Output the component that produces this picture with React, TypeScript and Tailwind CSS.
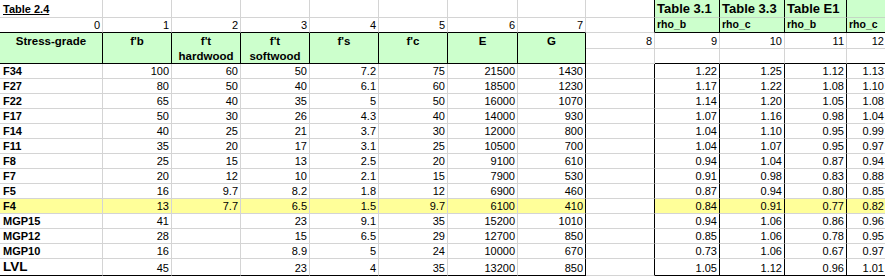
import React from "react";

type Row = [string, string[], string[]];

const rows: Row[] = [
  ["F34", ["100", "60", "50", "7.2", "75", "21500", "1430"], ["1.22", "1.25", "1.12", "1.13"]],
  ["F27", ["80", "50", "40", "6.1", "60", "18500", "1230"], ["1.17", "1.22", "1.08", "1.10"]],
  ["F22", ["65", "40", "35", "5", "50", "16000", "1070"], ["1.14", "1.20", "1.05", "1.08"]],
  ["F17", ["50", "30", "26", "4.3", "40", "14000", "930"], ["1.07", "1.16", "0.98", "1.04"]],
  ["F14", ["40", "25", "21", "3.7", "30", "12000", "800"], ["1.04", "1.10", "0.95", "0.99"]],
  ["F11", ["35", "20", "17", "3.1", "25", "10500", "700"], ["1.04", "1.07", "0.95", "0.97"]],
  ["F8", ["25", "15", "13", "2.5", "20", "9100", "610"], ["0.94", "1.04", "0.87", "0.94"]],
  ["F7", ["20", "12", "10", "2.1", "15", "7900", "530"], ["0.91", "0.98", "0.83", "0.88"]],
  ["F5", ["16", "9.7", "8.2", "1.8", "12", "6900", "460"], ["0.87", "0.94", "0.80", "0.85"]],
  ["F4", ["13", "7.7", "6.5", "1.5", "9.7", "6100", "410"], ["0.84", "0.91", "0.77", "0.82"]],
  ["MGP15", ["41", "", "23", "9.1", "35", "15200", "1010"], ["0.94", "1.06", "0.86", "0.96"]],
  ["MGP12", ["28", "", "15", "6.5", "29", "12700", "850"], ["0.85", "1.06", "0.78", "0.95"]],
  ["MGP10", ["16", "", "8.9", "5", "24", "10000", "670"], ["0.73", "1.06", "0.67", "0.97"]],
  ["LVL", ["45", "", "23", "4", "35", "13200", "850"], ["1.05", "1.12", "0.96", "1.01"]],
];

function C({ children, className }: { children?: React.ReactNode; className: string }) {
  return (
    <div className={"flex overflow-hidden whitespace-nowrap border-r border-b " + className}>
      {children}
    </div>
  );
}

const headers: [string, string | null][] = [
  ["Stress-grade", null],
  ["f'b", null],
  ["f't", "hardwood"],
  ["f't", "softwood"],
  ["f's", null],
  ["f'c", null],
  ["E", null],
  ["G", null],
];

export default function App() {
  return (
    <div className="w-[885px] h-[276px] overflow-hidden bg-white text-black font-['Liberation_Sans',Arial,sans-serif]">
      <div className="grid w-[887px] grid-cols-[103px_69px_69px_69px_69px_69px_70px_68px_69px_65px_65px_62px_40px] grid-rows-[18px_15px_16px_15px_repeat(13,15px)_17px]">
        {/* Row 1 */}
        <C className="items-end pl-[3px] pb-[1px] text-[11px] leading-[13px] font-bold underline border-r-[#d4d4d4] border-b-[#d4d4d4]">
          Table 2.4
        </C>
        {[1, 2, 3, 4, 5, 6, 7].map((i) => (
          <C key={"r1" + i} className="border-r-[#d4d4d4] border-b-[#d4d4d4]" />
        ))}
        <C className="border-r-black border-b-[#d4d4d4]" />
        {["Table 3.1", "Table 3.3", "Table E1", ""].map((t, i) => (
          <C
            key={"t" + i}
            className="items-end pl-[2px] pb-[1px] text-[13px] leading-[14px] font-bold bg-[#ccffcc] border-r-black border-b-[#c4d8c4]"
          >
            {t}
          </C>
        ))}

        {/* Row 2 */}
        {[0, 1, 2, 3, 4, 5, 6, 7].map((i) => (
          <C
            key={"r2" + i}
            className="items-end justify-end pr-[2px] text-[11px] leading-[13px] border-r-[#d4d4d4] border-b-black"
          >
            {i}
          </C>
        ))}
        <C className="border-r-black border-b-[#d4d4d4]" />
        {["rho_b", "rho_c", "rho_b", "rho_c"].map((t, i) => (
          <C
            key={"rho" + i}
            className="items-end pl-[2px] pb-[2px] text-[10.5px] leading-[12px] font-bold bg-[#ccffcc] border-r-black border-b-black"
          >
            {t}
          </C>
        ))}

        {/* Row 3 (merged header) */}
        {headers.map(([a, b], i) => (
          <C
            key={"h" + i}
            className="row-span-2 flex-col items-center pt-[1px] text-[11.5px] leading-[14.5px] font-bold bg-[#ccffcc] border-r-black border-b-black"
          >
            <span>{a}</span>
            {b && <span>{b}</span>}
          </C>
        ))}
        {[8, 9, 10, 11, 12].map((n) => (
          <C
            key={"n" + n}
            className="items-end justify-end pr-[2px] text-[11px] leading-[13px] border-r-[#d4d4d4] border-b-[#d4d4d4]"
          >
            {n}
          </C>
        ))}

        {/* Row 4 */}
        <C className="border-r-[#d4d4d4] border-b-[#d4d4d4]" />
        {[9, 10, 11, 12].map((n) => (
          <C key={"e" + n} className="border-r-[#d4d4d4] border-b-black" />
        ))}

        {/* Data rows */}
        {rows.map(([label, left, right], ri) => {
          const last = ri === rows.length - 1;
          const hl = label === "F4";
          const bg = hl ? "bg-[#ffff99]" : "bg-white";
          const bb = last ? "border-b-black" : "border-b-[#d4d4d4]";
          return (
            <React.Fragment key={label}>
              <C
                className={
                  last
                    ? `items-end pl-[3px] pb-[1px] text-[13.5px] leading-[15px] font-bold ${bg} border-r-[#d4d4d4] ${bb}`
                    : `items-end pl-[3px] text-[11px] leading-[13px] font-bold ${bg} border-r-[#d4d4d4] ${bb}`
                }
              >
                {label}
              </C>
              {left.map((v, ci) => (
                <C
                  key={"l" + ci}
                  className={`items-end justify-end pr-[2px] text-[11px] leading-[13px] ${bg} ${
                    ci === 6 ? "border-r-black" : "border-r-[#d4d4d4]"
                  } ${bb}`}
                >
                  {v}
                </C>
              ))}
              <C className="bg-white border-r-black border-b-[#d4d4d4]" />
              {right.map((v, ci) => (
                <C
                  key={"r" + ci}
                  className={`items-end justify-end pr-[2px] text-[11px] leading-[13px] ${bg} border-r-black ${bb}`}
                >
                  {v}
                </C>
              ))}
            </React.Fragment>
          );
        })}
      </div>
    </div>
  );
}
